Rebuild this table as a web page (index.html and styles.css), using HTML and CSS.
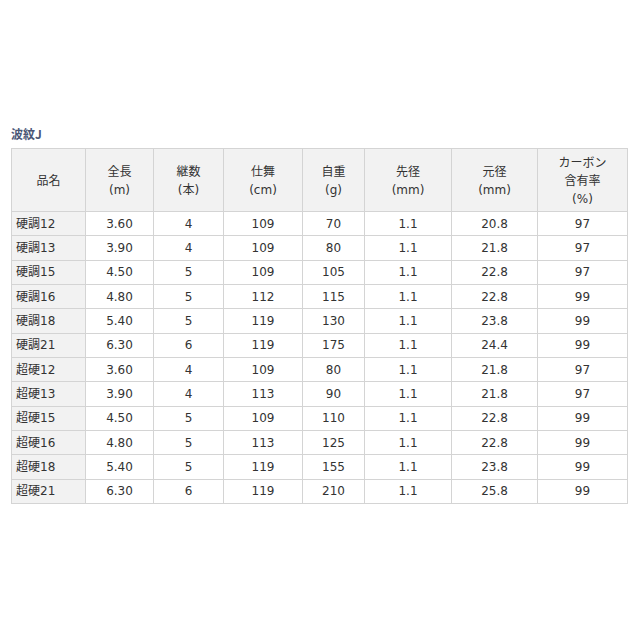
FILE: index.html
```html
<!DOCTYPE html>
<html lang="ja">
<head>
<meta charset="utf-8">
<link rel="stylesheet" href="styles.css">
</head>
<body>
<div class="page">
  <h2 class="title">波紋J</h2>
  <table class="spec">
    <colgroup>
      <col class="c1"><col class="c2"><col class="c3"><col class="c4"><col class="c5"><col class="c6"><col class="c7"><col class="c8">
    </colgroup>
    <thead>
      <tr>
        <th>品名</th>
        <th>全長<br>(m)</th>
        <th>継数<br>(本)</th>
        <th>仕舞<br>(cm)</th>
        <th>自重<br>(g)</th>
        <th>先径<br>(mm)</th>
        <th>元径<br>(mm)</th>
        <th>カーボン<br>含有率<br>(%)</th>
      </tr>
    </thead>
    <tbody>
      <tr><th>硬調12</th><td>3.60</td><td>4</td><td>109</td><td>70</td><td>1.1</td><td>20.8</td><td>97</td></tr>
      <tr><th>硬調13</th><td>3.90</td><td>4</td><td>109</td><td>80</td><td>1.1</td><td>21.8</td><td>97</td></tr>
      <tr><th>硬調15</th><td>4.50</td><td>5</td><td>109</td><td>105</td><td>1.1</td><td>22.8</td><td>97</td></tr>
      <tr><th>硬調16</th><td>4.80</td><td>5</td><td>112</td><td>115</td><td>1.1</td><td>22.8</td><td>99</td></tr>
      <tr><th>硬調18</th><td>5.40</td><td>5</td><td>119</td><td>130</td><td>1.1</td><td>23.8</td><td>99</td></tr>
      <tr><th>硬調21</th><td>6.30</td><td>6</td><td>119</td><td>175</td><td>1.1</td><td>24.4</td><td>99</td></tr>
      <tr><th>超硬12</th><td>3.60</td><td>4</td><td>109</td><td>80</td><td>1.1</td><td>21.8</td><td>97</td></tr>
      <tr><th>超硬13</th><td>3.90</td><td>4</td><td>113</td><td>90</td><td>1.1</td><td>21.8</td><td>97</td></tr>
      <tr><th>超硬15</th><td>4.50</td><td>5</td><td>109</td><td>110</td><td>1.1</td><td>22.8</td><td>99</td></tr>
      <tr><th>超硬16</th><td>4.80</td><td>5</td><td>113</td><td>125</td><td>1.1</td><td>22.8</td><td>99</td></tr>
      <tr><th>超硬18</th><td>5.40</td><td>5</td><td>119</td><td>155</td><td>1.1</td><td>23.8</td><td>99</td></tr>
      <tr><th>超硬21</th><td>6.30</td><td>6</td><td>119</td><td>210</td><td>1.1</td><td>25.8</td><td>99</td></tr>
    </tbody>
  </table>
</div>
</body>
</html>
```

FILE: styles.css
```css
html, body {
  margin: 0;
  padding: 0;
  background: #ffffff;
}
body {
  font-family: "DejaVu Sans", "Noto Sans CJK JP", sans-serif;
  font-size: 12px;
  color: #333333;
}
.page {
  padding: 126px 0 0 11px;
}
.title {
  margin: 0 0 7px 0;
  font-size: 12px;
  font-weight: bold;
  line-height: 15px;
  color: #4b5877;
  font-family: "Noto Sans CJK JP", sans-serif;
}
.spec {
  border-collapse: collapse;
  table-layout: fixed;
  width: 616px;
}
.c1 { width: 74px; }
.c2 { width: 68px; }
.c3 { width: 70px; }
.c4 { width: 79px; }
.c5 { width: 62px; }
.c6 { width: 87px; }
.c7 { width: 86px; }
.c8 { width: 90px; }
.spec th, .spec td {
  border: 1px solid #d4d4d4;
  padding: 0;
  font-weight: normal;
  text-align: center;
  vertical-align: middle;
}
.spec thead th {
  background: #f2f2f2;
  height: 61px;
  line-height: 18px;
  padding-top: 1px;
}
.spec tbody th {
  background: #f2f2f2;
  text-align: left;
  padding-left: 4px;
}
.spec tbody tr {
  height: 24.33px;
}
.spec tbody th, .spec tbody td {
  line-height: 16px;
}
```
